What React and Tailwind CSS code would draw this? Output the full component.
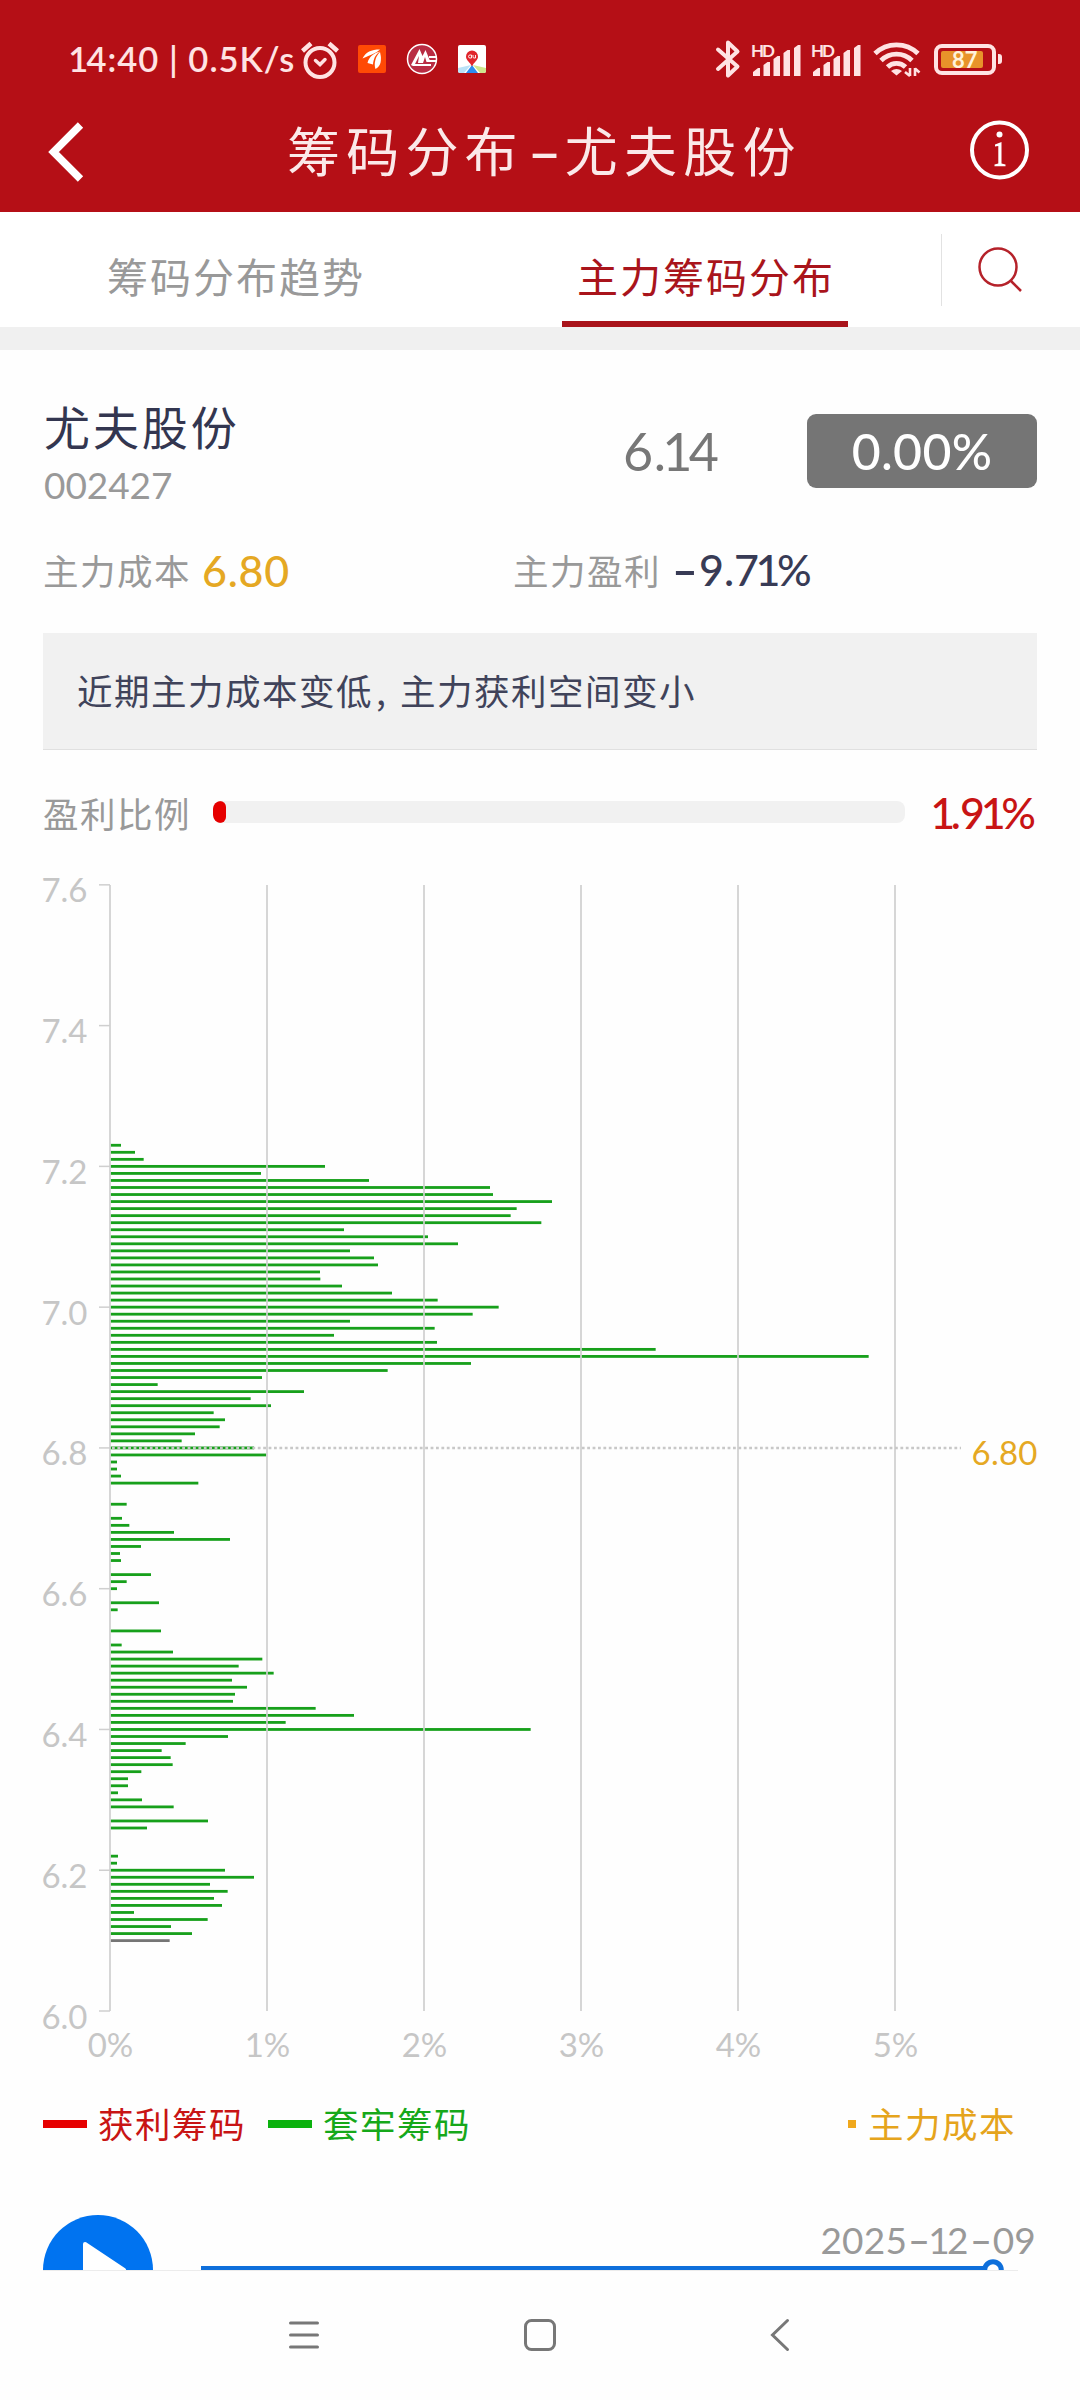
const NUM = "font-['Lato','Noto_Sans_CJK_SC',sans-serif]";

// Number text: tightens the "1" and widens the hyphen of the figure font.
function Num({ children, className = '' }) {
  return (
    <span className={`${NUM} whitespace-pre leading-none ${className}`}>
      {children.split('').map((c, i) => {
        if (c === '1') return <span key={i} className="-mx-[0.08em]">1</span>;
        if (c === '-') return <Dash key={i} />;
        return c;
      })}
    </span>
  );
}

function Dash() {
  return (
    <span className="inline-block w-[0.65em] scale-x-[1.3] text-center font-['Inter',sans-serif] leading-none tracking-normal">-</span>
  );
}

// Pairs of [price in cents, bar end in thirds of a pixel].
const BARS = [
  [723, 363], [722, 405], [721, 431], [720, 975], [719, 783], [718, 1107], [717, 1470], [716, 1479],
  [715, 1656], [714, 1550], [713, 1532], [712, 1624], [711, 1032], [710, 1284], [709, 1374], [708, 1050],
  [707, 1122], [706, 1134], [705, 960], [704, 961], [703, 1026], [702, 1176], [701, 1313], [700, 1496],
  [699, 1418], [698, 1050], [697, 1304], [696, 1002], [695, 1311], [694, 1967], [693, 2606], [692, 1413],
  [691, 1163], [690, 786], [689, 473], [688, 912], [687, 752], [686, 813], [685, 641], [684, 675],
  [683, 659], [682, 585], [681, 545], [680, 762], [679, 799], [678, 351], [677, 351], [676, 363],
  [675, 595], [672, 380], [670, 366], [669, 388], [668, 522], [667, 690], [666, 423], [665, 360],
  [664, 363], [662, 453], [661, 380], [660, 351], [658, 477], [657, 353], [654, 483], [652, 365],
  [651, 519], [650, 787], [649, 716], [648, 821], [647, 696], [646, 741], [645, 705], [644, 699],
  [643, 947], [642, 1062], [641, 857], [640, 1592], [639, 684], [638, 557], [637, 485], [636, 512],
  [635, 518], [634, 424], [633, 384], [632, 384], [631, 354], [630, 426], [629, 521], [627, 624],
  [626, 441], [622, 354], [621, 351], [620, 675], [619, 762], [618, 630], [617, 683], [616, 642],
  [615, 666], [614, 402], [613, 623], [612, 513], [611, 576], [610, 509],
];

const priceY = (cents) => 2011 - (cents - 600) * 7.0385;

function Chart() {
  const prices = [760, 740, 720, 700, 680, 660, 640, 620, 600];
  return (
    <svg className="mt-[30px] block h-[1205px] w-[994px] overflow-visible font-['Lato',sans-serif]" viewBox="43 865 994 1205">
      {BARS.map(([p, end]) => (
        <rect key={p} x="110.5" y={priceY(p) - 1.4} width={end / 3 - 110.5} height="2.8" fill={p === 610 ? '#757575' : '#17a01b'} />
      ))}
      {[0, 1, 2, 3, 4, 5].map((n) => (
        <g key={n}>
          <rect x={109 + n * 157} y="885" width="2" height="1126" fill="#cfcfcf" fillOpacity="0.85" />
          <text x={110.5 + n * 157} y="2057" textAnchor="middle" fontSize="33" fill="#c6c6c6">{n}%</text>
        </g>
      ))}
      {prices.map((p) => (
        <g key={p}>
          <rect x="99" y={priceY(p) - 0.75} width="11" height="1.5" fill="#cfcfcf" />
          <text x="87.5" y={priceY(p) + 17.5} textAnchor="end" fontSize="33" fill="#c6c6c6">{(p / 100).toFixed(1)}</text>
        </g>
      ))}
      <line x1="112" x2="961" y1="1448" y2="1448" stroke="#c8c8c8" strokeWidth="2.4" strokeDasharray="2.8 2.6" />
      <text x="971.5" y="1465" fontSize="33" fill="#e5a823" textLength="66">6.80</text>
    </svg>
  );
}

function Signal() {
  return (
    <svg className="h-[36px] w-[50px] overflow-visible" viewBox="0 0 50 36" fill="#ffe3e3">
      <text x="-1" y="15.500" fontSize="17" fontWeight="700" fontFamily="Lato, sans-serif" textLength="24">HD</text>
      <path d="M1 35v-4l5-4h2v8z" />
      <path d="M11.500 35V24l4-3h2.500v14z" />
      <path d="M21.500 35V18l4-3h2.500v20z" />
      <path d="M31.500 35V12l4-3h2.500v26z" />
      <path d="M42 35V7l4-3h2.500v31z" />
    </svg>
  );
}

function StatusBar() {
  return (
    <div className="flex h-[118px] items-center pl-[71px] pr-[78px] text-[#ffe3e3]">
      <Num className="w-[227px] text-[34.5px] font-semibold tracking-[1px]">14:40 | 0.5K/s</Num>
      <svg className="mt-[3px] h-[40px] w-[44px]" viewBox="0 0 44 40" fill="none" stroke="#ffe3e3" strokeWidth="4" strokeLinecap="round">
        <circle cx="22" cy="21.500" r="14.500" />
        <path d="M4.500 10 13 2.500M39.500 10 31 2.500" strokeLinecap="butt" strokeWidth="4.500" />
        <path d="m17.500 19.500 4.500 4 5-5" strokeWidth="3.500" />
      </svg>
      <svg className="ml-[16px] h-[28px] w-[28px]" viewBox="0 0 28 28">
        <rect width="28" height="28" rx="2" fill="#ff4a05" />
        <path d="M4.500 13.500C8 7 13 4.500 22 4.500C18 8 13 10 4.500 13.500Z" fill="#fff" />
        <path d="M9.500 18C11 12 15 8.500 22 6.500C17 10 15.500 14 15 19.500Z" fill="#fff" />
        <path d="M17.500 24c-2-5 0-13 4.500-17 2 8 1 14-4.500 17Z" fill="#fff" />
      </svg>
      <svg className="ml-[20px] h-[32px] w-[32px]" viewBox="0 0 32 32">
        <circle cx="16" cy="16" r="14.500" fill="#b92c43" stroke="#fff" strokeWidth="1.500" />
        <path d="M5 22 13.500 6l3 7 3-6 5 12h-4l-1.500-5-2 6H12l1-7-4 8h16v2H7z" fill="#fff" />
        <path d="M23 14h8M23 18h8" stroke="#fff" strokeWidth="1.800" />
      </svg>
      <svg className="ml-[20px] h-[28px] w-[28px]" viewBox="0 0 28 28">
        <rect width="28" height="28" rx="2" fill="#fff" />
        <path d="M0 23 13 20 6 28H2a2 2 0 0 1-2-2Z" fill="#b9e2f7" />
        <path d="m28 23-13-3 7 8h4a2 2 0 0 0 2-2Z" fill="#cfe58d" />
        <path d="m14 20 6 8H8z" fill="#2c8cf0" />
        <path d="M14 5.500a6 6 0 0 1 6 6c0 4-4 5.500-6 10-2-4.500-6-6-6-10a6 6 0 0 1 6-6Z" fill="#e0252b" />
        <path d="M13.500 10h-1.500q-1.500 0-1.500 1.500t1.500 1.500h1.500zM15 10v2q0 1 1 1h1.500v-3" fill="none" stroke="#fff" strokeWidth="0.900" />
      </svg>

      <div className="ml-auto flex items-center">
        <svg className="h-[40px] w-[26px]" viewBox="0 0 26 40" fill="none" stroke="#ffe3e3" strokeWidth="4" strokeLinejoin="round" strokeLinecap="round">
          <path d="m3 10.500 19.500 17L13 36.500V3.500l9.500 9L3 30" />
        </svg>
        <div className="ml-[11px] flex gap-[10px]">
          <Signal />
          <Signal />
        </div>
        <svg className="ml-[11px] h-[36px] w-[48px]" viewBox="0 0 48 36" fill="none" stroke="#ffe3e3" strokeWidth="4.800">
          <path d="M2 12.500a31 31 0 0 1 43 0" />
          <path d="M8 19.500a22 22 0 0 1 31 0" />
          <path d="M14.500 26a13 13 0 0 1 18 0" />
          <path d="M23.500 34.500 18 30q5.500-4 11 0z" fill="#ffe3e3" stroke="none" />
          <path d="M37 35V27M37 35l-5-4M42 27v8M42 27.500l4.500 4" strokeWidth="2.600" />
        </svg>
        <div className="ml-[13px] flex h-[31px] w-[62px] items-center rounded-[8px] border-[4px] border-[#ffe3e3] p-[3px]">
          <div className="h-[17px] w-[42px] rounded-[2px] bg-[#e8932a]">
            <Num className="-mt-[2px] ml-[11px] block text-[22px] font-bold text-[#fff3dc]">87</Num>
          </div>
        </div>
        <div className="ml-[2px] h-[10px] w-[4px] rounded-r-[3px] bg-[#ffe3e3]" />
      </div>
    </div>
  );
}

function Header() {
  return (
    <header className="h-[212px] bg-[#b50f16]">
      <StatusBar />
      <div className="flex h-[94px] items-center pb-[30px] pl-[46px] pr-[50px]">
        <svg className="mt-[4px] h-[60px] w-[40px] shrink-0" viewBox="0 0 40 60" fill="none" stroke="#fff" strokeWidth="7.500">
          <path d="M34.500 3 7.500 30l27 27" />
        </svg>
        <h1 className="ml-[201px] mt-[3px] whitespace-nowrap text-[53px] leading-none tracking-[6.200px] text-[#fbe9e9]">
          筹码分布<span className="inline-block w-[41px] scale-x-[1.400] text-center font-['Inter',sans-serif] tracking-normal">-</span>尤夫股份
        </h1>
        <svg className="ml-auto h-[60px] w-[60px] shrink-0" viewBox="0 0 60 60">
          <circle cx="29.500" cy="30" r="27.500" fill="none" stroke="#fff" strokeWidth="4" />
          <circle cx="29.500" cy="14.500" r="3" fill="#fff" />
          <path d="M25 24.500 31.500 22v21.500l4 1v1.800H24.500v-1.800l3.800-1V26l-3.300.5Z" fill="#fff" />
        </svg>
      </div>
    </header>
  );
}

function Tabs() {
  return (
    <nav className="flex h-[115px] bg-white text-[41px] leading-none tracking-[2px]">
      <div className="flex w-[470px] items-center justify-center pl-[2px] pt-[12px] text-[#999]">筹码分布趋势</div>
      <div className="flex w-[470px] flex-col items-center text-[#a9141b]">
        <span className="flex h-[109px] items-center pl-[2px] pt-[18px]">主力筹码分布</span>
        <span className="h-[6px] w-[286px] bg-[#a9141b]" />
      </div>
      <div className="ml-px mt-[22px] flex h-[72px] w-[139px] border-l border-[#e2e2e2] pl-[34px] pt-[11px]">
        <svg className="h-[50px] w-[50px]" viewBox="0 0 50 50" fill="none" stroke="#b5222a" strokeWidth="2.500">
          <circle cx="22" cy="22" r="18.500" />
          <path d="m35 36 10 10" />
        </svg>
      </div>
    </nav>
  );
}

const label = 'text-[35.500px] leading-none tracking-[1.500px] text-[#999]';

function Summary() {
  return (
    <>
      <div className="flex items-center pt-[52px]">
        <div className="flex w-[580px] flex-col">
          <span className="ml-px text-[46px] leading-none tracking-[2.900px] text-[#333650]">尤夫股份</span>
          <Num className="ml-px mt-[18px] text-[37px] tracking-[-0.100px] text-[#999]">002427</Num>
        </div>
        <Num className="mb-[3px] w-[184px] text-[52px] tracking-[0.500px] text-[#777]">6.14</Num>
        <div className="mb-[3px] flex h-[74px] w-[230px] items-center justify-center rounded-[9px] bg-[#757575]">
          <Num className="text-[50px] font-medium tracking-[0.300px] text-white">0.00%</Num>
        </div>
      </div>
      <div className="mt-[45px] flex h-[44px] items-center">
        <div className="flex w-[470px] items-center">
          <span className={label}>主力成本</span>
          <Num className="ml-[11px] text-[43px] font-medium tracking-[0.700px] text-[#e5a823]">6.80</Num>
        </div>
        <div className="flex items-center">
          <span className={label}>主力盈利</span>
          <Num className="ml-[10px] text-[43px] font-medium text-[#383b55]">-9.71%</Num>
        </div>
      </div>
      <div className="mt-[41px] flex h-[117px] items-center border-b border-[#e0e0e0] bg-[#f1f1f1] pb-[2px] pl-[34px]">
        <p className="whitespace-nowrap text-[35.500px] leading-none tracking-[1.500px] text-[#40435a]">
          近期主力成本变低<span className="inline-block w-[27px] pl-[3px]">,</span>主力获利空间变小
        </p>
      </div>
      <div className="mt-[41px] flex h-[44px] items-center">
        <span className={`${label} w-[170px]`}>盈利比例</span>
        <div className="mb-[2px] h-[22px] w-[692px] overflow-hidden rounded-[8px] bg-[#f1f1f1]">
          <div className="h-full rounded-[6px] bg-[#e60000]" style={{ width: '1.91%' }} />
        </div>
        <Num className="mb-[2px] ml-auto mr-[2px] text-[43px] font-medium tracking-[-0.900px] text-[#c81414]">1.91%</Num>
      </div>
    </>
  );
}

function Legend() {
  return (
    <div className="mt-[31px] flex h-[44px] items-center whitespace-nowrap text-[35.500px] leading-none tracking-[1.500px]">
      <span className="mt-[2px] h-[8px] w-[44px] bg-[#e60000]" />
      <span className="ml-[11px] w-[170px] text-[#c81414]">获利筹码</span>
      <span className="mt-[2px] h-[8px] w-[44px] bg-[#0bb20e]" />
      <span className="ml-[11px] text-[#16a81a]">套牢筹码</span>
      <span className="ml-auto mt-[2px] h-[8px] w-[8px] bg-[#f0a81c]" />
      <span className="ml-[12px] mr-[21px] text-[#e5a41c]">主力成本</span>
    </div>
  );
}

function Player() {
  return (
    <div className="mt-[70px] flex h-[55px] items-start overflow-hidden">
      <svg className="h-[110px] w-[110px] shrink-0" viewBox="0 0 110 110">
        <circle cx="55" cy="55" r="55" fill="#0073f0" />
        <path d="M42 29 81 55 42 81Z" fill="#fff" stroke="#fff" strokeWidth="4" strokeLinejoin="round" />
      </svg>
      <div className="ml-[48px] flex w-[836px] flex-col items-end pt-[6px]">
        <Num className="mr-[1px] h-[37px] text-[37px] tracking-[0.200px] text-[#999]">2025-12-09</Num>
        <svg className="h-[24px] w-[836px] shrink-0" viewBox="0 0 836 24">
          <rect y="8" width="782" height="4" fill="#0e6fdb" />
          <circle cx="792" cy="12" r="8.300" fill="#fff" stroke="#0e6fdb" strokeWidth="5" />
        </svg>
      </div>
    </div>
  );
}

function NavBar() {
  return (
    <footer className="h-[130px] bg-[#fefefe]">
      <div className="mx-[43px] h-px w-[975px] bg-[#ececec]" />
      <div className="flex h-[129px] items-center pb-[2px] pl-[286px]">
        <svg className="h-[36px] w-[36px]" viewBox="0 0 36 36" stroke="#777" strokeWidth="3" strokeLinecap="round">
          <path d="M4.500 6h27M4.500 18h27M4.500 30h27" />
        </svg>
        <svg className="ml-[200px] h-[36px] w-[36px]" viewBox="0 0 36 36" fill="none" stroke="#777" strokeWidth="3">
          <rect x="3.500" y="3.500" width="29" height="29" rx="6" />
        </svg>
        <svg className="ml-[204px] h-[36px] w-[36px]" viewBox="0 0 36 36" fill="none" stroke="#777" strokeWidth="3" strokeLinecap="round">
          <path d="M25.500 3.500 10.500 18l15 14.500" />
        </svg>
      </div>
    </footer>
  );
}

export default function App() {
  return (
    <div className="h-[2400px] w-[1080px] overflow-hidden bg-[#fefefe] font-['Noto_Sans_CJK_SC',sans-serif]">
      <Header />
      <Tabs />
      <div className="h-[23px] bg-[#f0f0f0]" />
      <main className="h-[1920px] px-[43px]">
        <Summary />
        <Chart />
        <Legend />
        <Player />
      </main>
      <NavBar />
    </div>
  );
}
